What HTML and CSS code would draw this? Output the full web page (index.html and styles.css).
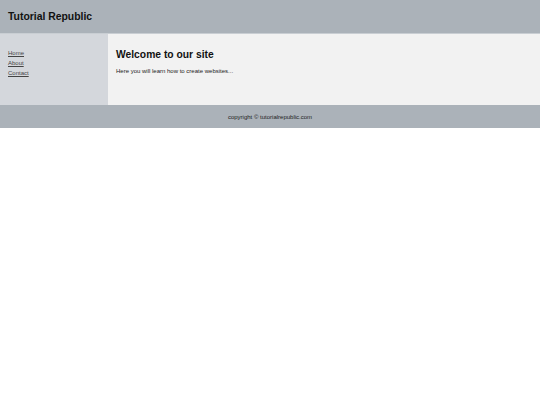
FILE: index.html
```html
<!DOCTYPE html>
<html>
<head>
<meta charset="utf-8">
<title>Tutorial Republic</title>
<link rel="stylesheet" href="styles.css">
</head>
<body>
<div class="page">
  <header class="header"><h1 class="logo">Tutorial Republic</h1></header>
  <div class="wrap">
    <nav class="sidebar">
      <a href="#">Home</a>
      <a href="#">About</a>
      <a href="#">Contact</a>
    </nav>
    <main class="content">
      <h2 class="title">Welcome to our site</h2>
      <p class="text">Here you will learn how to create websites...</p>
    </main>
  </div>
  <footer class="footer"><p class="copy">copyright © tutorialrepublic.com</p></footer>
</div>
</body>
</html>
```
FILE: styles.css
```css
html, body { margin: 0; padding: 0; background: #fff; }
body { font-family: "Liberation Sans", Arial, sans-serif; color: #111; }
.page { width: 540px; }
.header { background: #abb2b9; height: 33px; border-bottom: 1px solid #c9ced3; display: flex; align-items: center; padding: 0 8px; }
.logo { margin: 0; font-size: 10.4px; font-weight: bold; color: #111; }
.wrap { display: flex; height: 71px; }
.sidebar { width: 100px; background: #d4d7dc; padding: 14px 0 0 8px; display: flex; flex-direction: column; }
.sidebar a { font-size: 6px; line-height: 10px; color: #444; text-decoration: underline; }
.content { flex: 1; background: #f2f2f2; padding: 15px 8px 0 8px; }
.title { margin: 0; font-size: 10.3px; font-weight: bold; line-height: 12px; }
.text { margin: 6px 0 0; font-size: 6px; line-height: 8px; color: #222; }
.footer { background: #abb2b9; height: 23px; display: flex; align-items: center; justify-content: center; }
.copy { margin: 0; font-size: 6px; color: #222; }
```
